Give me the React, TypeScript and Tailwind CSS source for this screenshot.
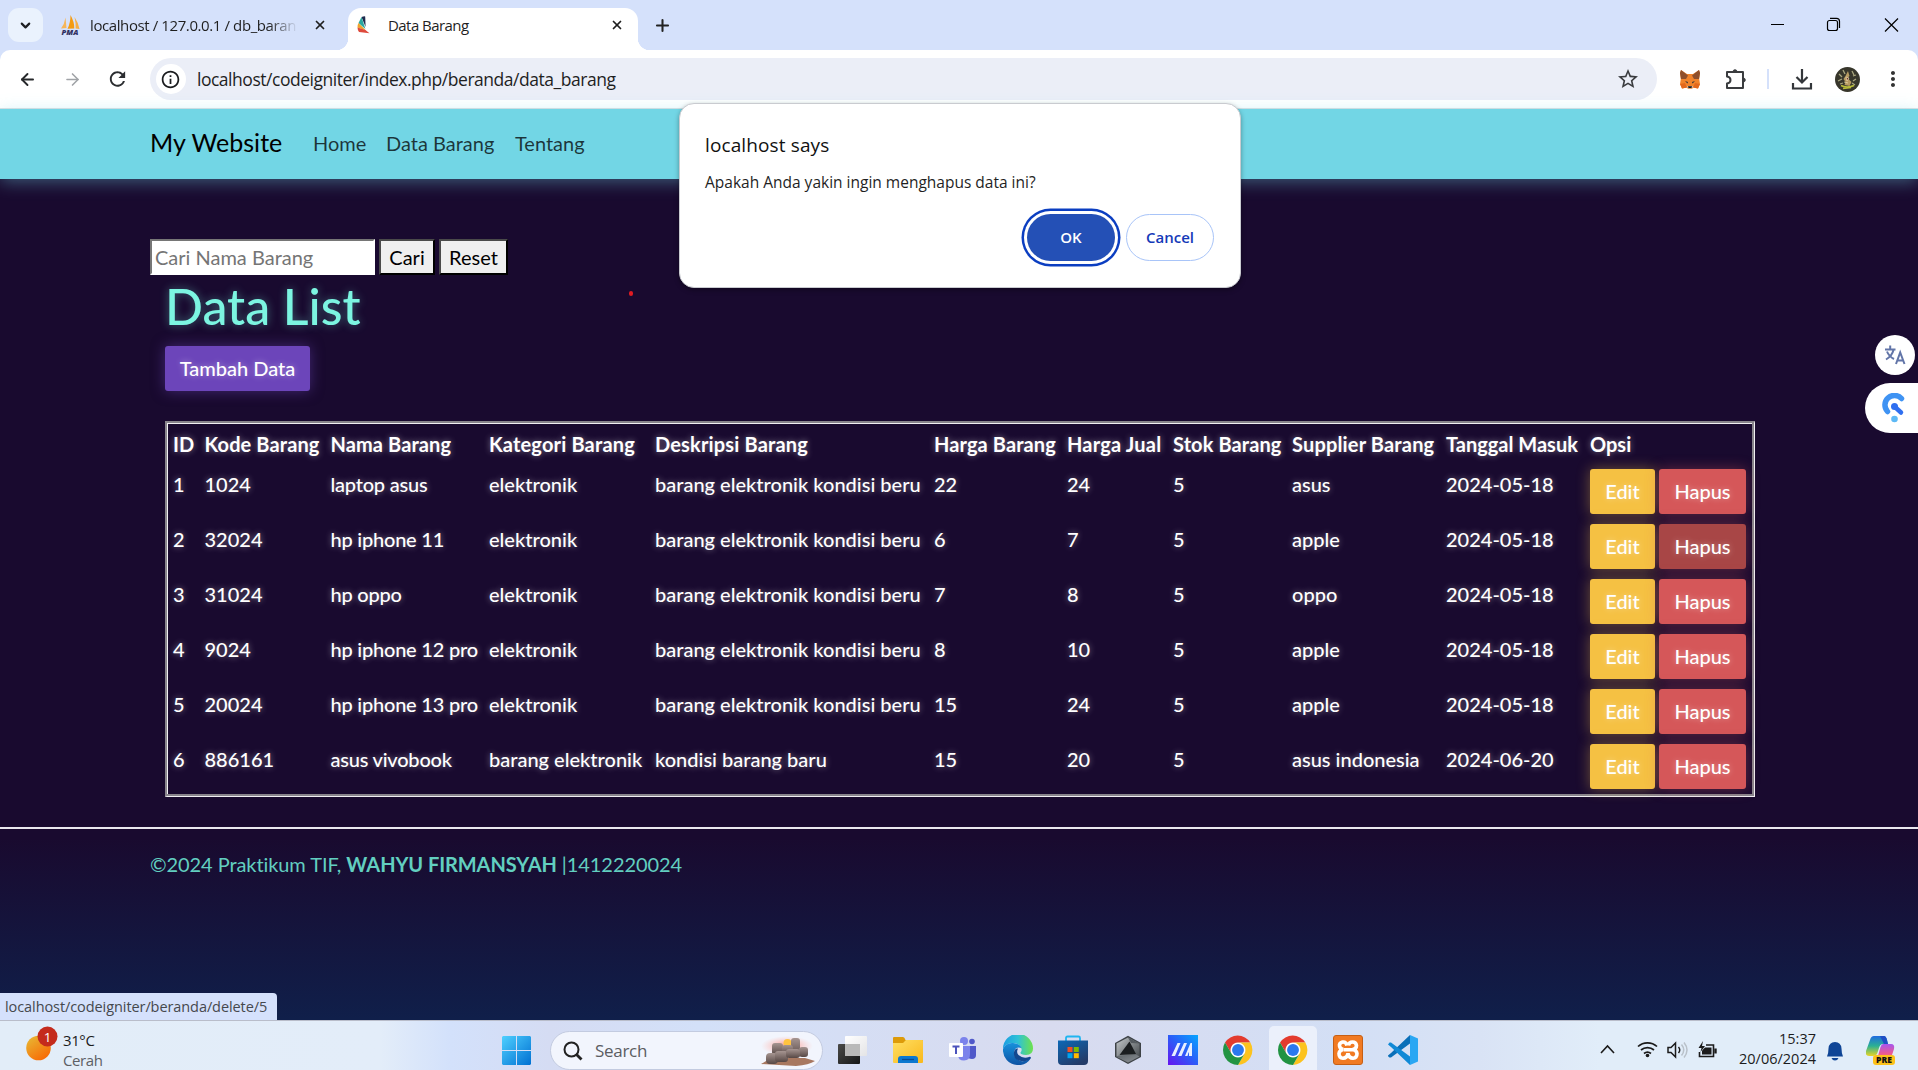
import React from 'react';
import { ChevronDown, X, Plus, ArrowLeft, ArrowRight } from 'lucide-react';
import { MdRefresh, MdInfoOutline, MdStarBorder, MdMoreVert } from 'react-icons/md';

const seg = "font-['Open_Sans','Noto_Sans',sans-serif] whitespace-nowrap";

const rows = [
  ['1', '1024', 'laptop asus', 'elektronik', 'barang elektronik kondisi beru', '22', '24', '5', 'asus', '2024-05-18'],
  ['2', '32024', 'hp iphone 11', 'elektronik', 'barang elektronik kondisi beru', '6', '7', '5', 'apple', '2024-05-18'],
  ['3', '31024', 'hp oppo', 'elektronik', 'barang elektronik kondisi beru', '7', '8', '5', 'oppo', '2024-05-18'],
  ['4', '9024', 'hp iphone 12 pro', 'elektronik', 'barang elektronik kondisi beru', '8', '10', '5', 'apple', '2024-05-18'],
  ['5', '20024', 'hp iphone 13 pro', 'elektronik', 'barang elektronik kondisi beru', '15', '24', '5', 'apple', '2024-05-18'],
  ['6', '886161', 'asus vivobook', 'barang elektronik', 'kondisi barang baru', '15', '20', '5', 'asus indonesia', '2024-06-20'],
];

const heads: [string, string][] = [
  ['ID', 'w-[31.5px]'],
  ['Kode Barang', 'w-[126px] tracking-[0.1px]'],
  ['Nama Barang', 'w-[158.5px] tracking-[0.1px]'],
  ['Kategori Barang', 'w-[166px] tracking-[0.16px]'],
  ['Deskripsi Barang', 'w-[279px] tracking-[0.16px]'],
  ['Harga Barang', 'w-[133px] tracking-[0.1px]'],
  ['Harga Jual', 'w-[106px] tracking-[0.2px]'],
  ['Stok Barang', 'w-[119px] tracking-[0.1px]'],
  ['Supplier Barang', 'w-[154px] tracking-[0.16px]'],
  ['Tanggal Masuk', 'w-[144px]'],
  ['Opsi', 'w-[167px]'],
];

function PmaIcon() {
  return (
    <svg viewBox="0 0 20 20" className="h-5 w-5 shrink-0">
      <path d="M5.500 2.500 6.500 13 1 13.500Q4.500 9 5.500 2.500Z" fill="#f6b65a" />
      <path d="M10.500 0Q14.500 7 14.300 13.500L7.500 13.800Q10.500 8 10.500 0Z" fill="#f49b12" />
      <path d="M14.500 2Q18.500 8 19.500 14L15.600 13.500Q16 8 14.500 2Z" fill="#f6ae45" />
      <text x="10" y="19.800" fontSize="7.600" textAnchor="middle" fontWeight="800" fontStyle="italic" fill="#2f3061" fontFamily="Open Sans">PMA</text>
    </svg>
  );
}

function SailIcon() {
  return (
    <svg viewBox="0 0 14 18" className="h-[18px] w-[14px] shrink-0">
      <path d="M4.500 1Q7.500 0 8.200 .5L8.600 11Z" fill="#1f2a4d" />
      <path d="M4.500 1Q3 4 1.500 7L8.400 13Z" fill="#2ba8a0" />
      <path d="M1.500 7Q.3 9 .5 11.500L9 14.500Z" fill="#f0a32c" />
      <path d="M.5 11.500Q.5 14 2 16L12.500 17.300Q10 15.500 8.500 14Z" fill="#de4a3c" />
    </svg>
  );
}

function TabStrip() {
  return (
    <div className="flex h-[50px] shrink-0 bg-[#d5e1fb] pl-2">
      <div className="mt-2 flex h-[34px] w-[35px] items-center justify-center rounded-[11px] bg-[#eaf2fd]">
        <ChevronDown size={15} strokeWidth={3.4} className="text-[#1d1f22]" />
      </div>
      <div className="ml-[17px] flex h-[50px] w-[280px] items-center">
        <PmaIcon />
        <span className={`${seg} ml-[10px] w-[208px] text-[15px] tracking-[-0.4px] text-[#1f1f1f] [mask-image:linear-gradient(to_right,black_86%,transparent)]`}>localhost / 127.0.0.1 / db_baran</span>
        <X size={14} strokeWidth={3} className="ml-[15px] text-[#1f1f1f]" />
      </div>
      <div className="relative mt-2 ml-[8px] flex h-[42px] w-[290px] items-center rounded-t-[13px] bg-white pb-2 pl-[9px]">
        <div className="absolute bottom-0 -left-3 h-3 w-3 bg-[radial-gradient(circle_at_0_0,transparent_12px,white_12.5px)]" />
        <div className="absolute -right-3 bottom-0 h-3 w-3 bg-[radial-gradient(circle_at_100%_0,transparent_12px,white_12.5px)]" />
        <SailIcon />
        <span className={`${seg} ml-[17px] w-[222px] text-[15px] tracking-[-0.55px] text-[#1f1f1f]`}>Data Barang</span>
        <X size={14} strokeWidth={3} className="text-[#1f1f1f]" />
      </div>
      <Plus size={19} strokeWidth={2.6} className="mt-[16px] ml-[15px] text-[#222]" />
      <div className="mt-[13px] mr-[19px] ml-auto flex h-6 items-center text-black">
        <svg width="132" height="24" fill="none" stroke="currentColor" strokeWidth="1.2">
          <path d="M4 11.500h13M118 5.500l13 13m0-13l-13 13" />
          <rect x="60.500" y="7.500" width="10" height="10" rx="2" />
          <path d="M63 5.300h6.500q3 0 3 3V15" />
        </svg>
      </div>
    </div>
  );
}

function FoxIcon() {
  return (
    <svg viewBox="0 0 20 19" className="h-[19px] w-5">
      <path d="M1 0 7 4H13L19 0 20 3 19.200 9 20 14 18 18.500 13 17.500 12 19H8L7 17.500 2 18.500 0 14 .8 9 0 3Z" fill="#f0832b" />
      <path d="M1 0 8 5.500 6 9 1 9 0 3ZM19 0 12 5.500 14 9 19 9 20 3Z" fill="#8f4f2b" />
      <path d="M5 11l3 1-.5 1.500ZM15 11l-3 1 .5 1.500Z" fill="#2b3139" />
      <path d="M7 16h6l-1 2.500H8Z" fill="#cfbfb2" />
      <path d="M8 16.200h4l-.5 1.800h-3Z" fill="#17191d" />
      <path d="M0 14l5-1 2 4.500L2 18.500ZM20 14l-5-1-2 4.500L18 18.500Z" fill="#e2681c" />
    </svg>
  );
}

function Toolbar() {
  return (
    <div className="shrink-0 bg-[#d5e1fb]">
      <div className="flex h-[59px] items-center rounded-t-[10px] border-b border-[#dcdfe2] bg-white pr-[13px] pl-[18px]">
        <ArrowLeft size={19} strokeWidth={2.4} className="text-[#26282b]" />
        <ArrowRight size={19} strokeWidth={2} className="ml-[26px] text-[#a0a3a7]" />
        <MdRefresh className="ml-[24px] h-[24px] w-[23px] text-[#2b2d30]" />
        <div className="ml-[21px] flex h-[42px] w-[1508px] items-center rounded-full bg-[#ebeef7] pr-[17px] pl-[6px]">
          <div className="flex h-[30px] w-[30px] items-center justify-center rounded-full bg-white">
            <MdInfoOutline className="h-[21px] w-[21px] text-[#1b1c1f]" />
          </div>
          <span className={`${seg} ml-[11px] text-[17.5px] tracking-[-0.47px] text-[#1f1f1f]`}>localhost/codeigniter/index.php/beranda/data_barang</span>
          <MdStarBorder className="ml-auto h-[24px] w-[24px] text-[#3a3c3f]" />
        </div>
        <div className="ml-[23px]"><FoxIcon /></div>
        <svg viewBox="0 0 22 22" className="ml-[25px] h-[22px] w-[22px]" fill="none" stroke="#3a3c3f" strokeWidth="2" strokeLinejoin="round">
          <path d="M2 4h16v16H2v-4.500q3.500-.5 3.500-3.500T2 8.500Z" />
          <path d="M8 4q0-2.300 2-2.300T12 4ZM18 10q2.300 0 2.300 2T18 14Z" fill="#3a3c3f" strokeWidth="1" />
        </svg>
        <div className="ml-[20px] h-5 w-[2px] bg-[#d5e1fb]" />
        <svg viewBox="0 0 22 22" className="ml-[22px] h-[22px] w-[22px]" fill="none" stroke="#33363a" strokeWidth="2.200">
          <path d="M11 1v13M5.500 9l5.500 5.500L16.500 9M2 15v5.500h18V15" />
        </svg>
        <svg viewBox="0 0 25 25" className="ml-[22px] h-[25px] w-[25px]">
          <circle cx="12.500" cy="12.500" r="12.500" fill="#37362b" />
          <path d="M4 7l3 3M17 4l2 4M3 14l4-2M21 12l-3 2M8 3l2 4M20 18l-3-2M18 9l3-1M5 17l3-1" stroke="#a9a67e" strokeWidth="1.300" />
          <path d="M13 4l1.500 5-2 2 4 4-2 4-5-1 1-3-2-3 2-3Z" fill="#b79b62" />
          <path d="M11 10l3 1-2 3ZM9 15l4 1" fill="#6d2f2c" stroke="#f0e3b0" strokeWidth=".7" />
          <path d="M6 18.500q6 3 13 0M8 21.500l8-1" stroke="#b9bd3a" strokeWidth="1.500" fill="none" />
        </svg>
        <MdMoreVert className="ml-[21px] h-[24px] w-[24px] text-[#333]" />
      </div>
    </div>
  );
}

function Navbar() {
  return (
    <nav className="relative flex h-[70px] shrink-0 items-center bg-[#72d6e5] pb-[2px] pl-[150px] shadow-[0_3px_16px_rgba(114,214,229,0.4)]">
      <span className="w-[163px] text-[25px] tracking-[0.05px] text-black">My Website</span>
      <span className="w-[73px] text-[20px] text-black/75">Home</span>
      <span className="w-[129px] text-[20px] text-black/75">Data Barang</span>
      <span className="text-[20px] text-black/75">Tentang</span>
    </nav>
  );
}

const glow = '[text-shadow:0_0_6px_rgba(255,255,255,0.45)]';

function Content() {
  return (
    <main className="flex flex-1 flex-col items-start bg-[linear-gradient(180deg,#190a2f_0px,#190a2f_660px,#101f4a_840px)] pt-[60px] text-[20px] leading-[30px] [font-variant-ligatures:none]">
      <div className="flex h-[36px] gap-[4px] pl-[150px] text-black">
        <div className="flex w-[225px] items-center border-2 border-[#767676] border-r-white border-b-white bg-white pb-[1px] pl-[3px] text-[#757575]">Cari Nama Barang</div>
        <div className="flex w-[56px] items-center justify-center border-[2px] border-t-[#4a4a4a] border-r-black border-b-black border-l-[#4a4a4a] bg-[#efefef] pb-[1px]">Cari</div>
        <div className="flex w-[69px] items-center justify-center border-[2px] border-t-[#4a4a4a] border-r-black border-b-black border-l-[#4a4a4a] bg-[#efefef] pb-[1px]">Reset</div>
      </div>
      <h1 className="mt-[1px] ml-[165px] h-[70px] text-[50px] leading-[60px] font-medium text-[#7cf5e1] [text-shadow:0_0_10px_rgba(124,245,225,0.4)]">Data List</h1>
      <div className="ml-[165px] flex h-[45px] w-[145px] items-center justify-center rounded-[3px] bg-[#6c45ba] pb-[2px] font-medium text-white shadow-[0_0_14px_rgba(108,69,186,0.5)] [text-shadow:0_0_6px_rgba(255,255,255,0.4)]">Tambah Data</div>
      <table className="mt-[30px] ml-[165px] w-[1590px] table-fixed border-separate border-spacing-0 border-t-2 border-r border-b border-l-2 border-t-[#88858c] border-r-[#f1f0f3] border-b-[#f1f0f3] border-l-[#88858c] pt-px pr-[2px] pb-[2px] pl-px text-left text-white shadow-[inset_-2px_-2px_0_#88858c,inset_1px_1px_0_#f1f0f3]">
        <thead>
          <tr className="h-[40px]">
            {heads.map(([h, w]) => (
              <th key={h} className={`${w} ${glow} p-[5px] align-top font-bold whitespace-nowrap`}>{h}</th>
            ))}
          </tr>
        </thead>
        <tbody>
          {rows.map((r) => (
            <tr key={r[0]} className="h-[55px]">
              {r.map((c, i) => (
                <td key={i} className={`${glow} p-[5px] align-top font-medium whitespace-nowrap ${i === 2 ? 'tracking-[-0.22px]' : ''}`}>{c}</td>
              ))}
              <td className="p-[5px] align-top font-medium">
                <div className="flex h-[45px] gap-[4px] [text-shadow:0_0_6px_rgba(255,255,255,0.4)]">
                  <div className="flex w-[65px] items-center justify-center rounded-[3px] bg-[#f5c143] pb-[2px] shadow-[0_0_14px_rgba(245,193,67,0.4)]">Edit</div>
                  <div className={`flex w-[87px] items-center justify-center rounded-[3px] pb-[2px] shadow-[0_0_14px_rgba(213,87,89,0.4)] ${r[0] === '2' ? 'bg-[#a84646]' : 'bg-[#d55759]'}`}>Hapus</div>
                </div>
              </td>
            </tr>
          ))}
        </tbody>
      </table>
      <footer className="mt-[30px] w-full border-t-2 border-[#e9e7ee] pt-[20px] pl-[150px] tracking-[-0.08px] text-[#62cfc0]">
        ©2024 Praktikum TIF, <b>WAHYU FIRMANSYAH</b> |1412220024
      </footer>
    </main>
  );
}

function Dialog() {
  return (
    <div className={`${seg} absolute top-[103px] left-[679px] flex h-[185px] w-[562px] flex-col rounded-[15px] border border-[#c9cbd0] bg-white pl-[25px] text-[#1f1f1f] shadow-[0_2px_5px_rgba(0,0,0,0.35)]`}>
      <div className="mt-[27px] text-[19px] leading-7 font-medium tracking-[0.12px] text-[#111]">localhost says</div>
      <div className="mt-[11px] text-[15.5px] leading-6">Apakah Anda yakin ingin menghapus data ini?</div>
      <div className="mt-[20px] mr-[26px] flex justify-end gap-[11px] text-[15px] font-semibold">
        <div className="flex h-[47px] w-[88px] items-center justify-center rounded-full bg-[#2450b6] text-white shadow-[0_0_0_3px_white,0_0_0_5.5px_#0b3ec1]">OK</div>
        <div className="flex h-[47px] w-[88px] items-center justify-center rounded-full border border-[#a8c4f8] text-[#1439b8]">Cancel</div>
      </div>
    </div>
  );
}

function FloatingTools() {
  return (
    <div className="absolute top-[335px] right-0 flex flex-col items-end gap-2">
      <div className="mr-[3px] flex h-10 w-10 items-center justify-center rounded-full bg-white">
        <svg viewBox="0 0 22 22" className="h-[22px] w-[22px]" fill="none" stroke="#6275a8" strokeWidth="2">
          <path d="M1 5.500h10.500M6.200 1.500v4M3 7.500q2 5 7 7.500M9.500 6q-1.500 6-7.500 9.500M12 20l4.200-11.500L20.500 20M13.500 16.500h5.500" />
        </svg>
      </div>
      <div className="flex h-[50px] w-[53px] items-center rounded-l-full bg-white pl-[17px]">
        <svg viewBox="0 0 24 30" className="h-[30px] w-6" fill="none">
          <path d="M19.500 5.500A9 9 0 1 0 5.500 18.500" stroke="#3f93f3" strokeWidth="5.500" strokeLinecap="round" />
          <circle cx="12.500" cy="13.500" r="3.500" fill="#2f6ff0" />
          <path d="M13 14l6 5.500" stroke="#2f6ff0" strokeWidth="4.500" strokeLinecap="round" />
          <circle cx="12.500" cy="26" r="3.300" fill="#5db9f5" />
        </svg>
      </div>
    </div>
  );
}

function ChromeIcon() {
  return (
    <svg viewBox="0 0 48 48" className="h-[30px] w-[30px]">
      <circle cx="24" cy="24" r="12" fill="#fff" />
      <path d="M24 12h19.780A24 24 0 0 0 3.210 12L13.600 30A12 12 0 0 1 24 12Z" fill="#e33b2e" />
      <path d="M34.390 30 24 48A24 24 0 0 0 43.780 12H24A12 12 0 0 1 34.390 30Z" fill="#fcc31e" />
      <path d="M13.610 30 3.220 12A24 24 0 0 0 24 48L34.390 30A12 12 0 0 1 13.610 30Z" fill="#229342" />
      <circle cx="24" cy="24" r="9.500" fill="#2b78ee" />
    </svg>
  );
}

function TaskIcon({ n }: { n: number }) {
  const c = 'h-[30px] w-[30px]';
  switch (n) {
    case 0:
      return (
        <svg viewBox="0 0 30 30" className={c}>
          <defs>
            <linearGradient id="tv" x2="1" y2="1"><stop stopColor="#4a4a48" /><stop offset="1" stopColor="#151617" /></linearGradient>
            <linearGradient id="tw" x2="1" y2="1"><stop stopColor="#fff" /><stop offset="1" stopColor="#e4e4e6" /></linearGradient>
          </defs>
          <rect x="0" y="9" width="22" height="20" rx="1" fill="url(#tv)" />
          <rect x="7" y="1" width="22" height="20" rx="1" fill="url(#tw)" />
          <path d="M7 9h15v12H7Z" fill="#b9b9b9" />
        </svg>
      );
    case 1:
      return (
        <svg viewBox="0 0 30 30" className={c}>
          <defs><linearGradient id="fo" x2="1" y2="1"><stop stopColor="#ffdf63" /><stop offset="1" stopColor="#f9b81c" /></linearGradient></defs>
          <path d="M0 3q0-1 1-1h9q1.500 0 2.500 3H29q1 0 1 1v3H0Z" fill="#dd9b0a" />
          <path d="M0 8h10l3-3h16q1 0 1 1v21q0 1-1 1H1q-1 0-1-1Z" fill="url(#fo)" />
          <path d="M5 28v-4q0-3 3-3h14q3 0 3 3v4Z" fill="#0c78d0" />
          <path d="M9 24.500h12" stroke="#0a4b92" strokeWidth="1.300" />
        </svg>
      );
    case 2:
      return (
        <svg viewBox="0 0 30 30" className={c}>
          <circle cx="16" cy="6" r="4" fill="#7b83eb" />
          <circle cx="24" cy="6.500" r="2.800" fill="#5059c9" />
          <path d="M20 11h8v9q0 4-4 4t-5-3Z" fill="#5059c9" />
          <path d="M11 11h11v8q0 6.500-6 6.500T10 20Z" fill="#7b83eb" />
          <rect x="1" y="8" width="14" height="14" rx="1" fill="#fff" />
          <path d="M4.500 11.500h7M8 11.500V19" stroke="#4b53bc" strokeWidth="2" />
        </svg>
      );
    case 3:
      return (
        <svg viewBox="0 0 30 30" className={c}>
          <defs>
            <linearGradient id="ea" x2="1"><stop stopColor="#1b9de2" /><stop offset=".5" stopColor="#2fc2d6" /><stop offset="1" stopColor="#6ee24b" /></linearGradient>
            <linearGradient id="eb" x2="0" y2="1"><stop stopColor="#1791dc" /><stop offset="1" stopColor="#0e52a4" /></linearGradient>
          </defs>
          <path d="M0 14A15 15 0 0 1 30 13.500Q30 20 23 20 17 20 17.500 17.500 19 16 18.500 14 17 8 9 8 3 8 0 14Z" fill="url(#ea)" />
          <path d="M0 14Q3 7.500 10 8 17 8.500 18.500 13 12.500 11 11 17 10.500 24 18 26 23 27 28 23 23 31 14 30A15 15 0 0 1 0 14Z" fill="url(#eb)" />
          <path d="M11 17Q10 25 18 26 24 27 28 23 27.500 21 26 22 20 24 15.500 20 13 17.500 15 13.500 12 13 11 17Z" fill="#13478f" />
        </svg>
      );
    case 4:
      return (
        <svg viewBox="0 0 30 30" className={c}>
          <defs><linearGradient id="st" x2=".6" y2="1"><stop stopColor="#0c68b6" /><stop offset="1" stopColor="#243b68" /></linearGradient></defs>
          <path d="M8 7V3q0-1.500 1.500-1.500h11Q22 1.500 22 3v4" fill="none" stroke="#20b5f0" strokeWidth="1.800" />
          <path d="M0 5.500h30V26q0 4-4 4H4q-4 0-4-4Z" fill="url(#st)" />
          <path d="M9.500 12h5v5h-5Z" fill="#f25022" /><path d="M15.800 12h5v5h-5Z" fill="#7fba00" />
          <path d="M9.500 18.200h5v5h-5Z" fill="#00a4ef" /><path d="M15.800 18.200h5v5h-5Z" fill="#ffb900" />
        </svg>
      );
    case 5:
      return (
        <svg viewBox="0 0 30 30" className={c}>
          <defs>
            <linearGradient id="ha" x2="1" y2="1"><stop stopColor="#c4c8ca" /><stop offset="1" stopColor="#3a3f43" /></linearGradient>
            <linearGradient id="hb" x2="1" y2="1"><stop stopColor="#5c6266" /><stop offset="1" stopColor="#8d9297" /></linearGradient>
          </defs>
          <path d="M15 .8 28 8V22L15 29 2 22V8Z" fill="#3e4347" />
          <path d="M15 2.500 26.500 8.500V21.500L15 27.500 3.500 21.500V8.500Z" fill="url(#ha)" />
          <path d="M15 2.500 26.500 8.500 18 8Z" fill="#555b60" />
          <path d="M3.500 21.500 6 20.500 23 19.500 26.500 21.500 15 27.500Z" fill="url(#hb)" />
          <path d="M16.500 6.500 23 19 6.500 20Z" fill="#1b1e20" />
        </svg>
      );
    case 6:
      return (
        <svg viewBox="0 0 30 30" className={c}>
          <defs><linearGradient id="ma" x1="1" x2="0" y2="1"><stop stopColor="#05a6ff" /><stop offset=".5" stopColor="#2c5cf8" /><stop offset="1" stopColor="#6714f0" /></linearGradient></defs>
          <path d="M0 0h30v30H0Z" fill="url(#ma)" />
          <path d="M3.500 21 9.500 8H12.500L7 21ZM10 21 16 8H19L13.500 21Z" fill="#e8efff" />
          <path d="M17 21 22.500 8H24V21H21V17.500H20.500L19.500 21Z" fill="#e8efff" />
        </svg>
      );
    case 9:
      return (
        <div className="flex h-[30px] w-[30px] items-center justify-center rounded-[3px] border border-[#c65f14] bg-[#f17a22]">
          <svg viewBox="0 0 24 24" className="h-[24px] w-[24px]" fill="none" stroke="#fff" strokeWidth="3.600">
            <path d="M11 7.500Q10 3.500 6.500 4 3 5 3.500 8 4 11 7.500 11.500 3.500 12 3 15.500 3 20 7 20.200 11 20 12 15.500 13 20 17 20.200 21 20 21 15.500 20.500 12 16.500 11.500 20.500 11 20.500 7.500 20 4 16.500 4 13 4 12.500 7.500M8 11.800h8.500" />
          </svg>
        </div>
      );
    case 10:
      return (
        <svg viewBox="0 0 30 30" className={c}>
          <path d="M22 0 3 18 0 20.500Q-.5 21 1.500 22.500L3 22.500 22 8.500Z" fill="#0a6fb8" />
          <path d="M22 30 3 12 0 9.500 1.500 7.500 3 7.500 22 21.500Z" fill="#1089d6" />
          <path d="M22 0 30 3.500V26.500L22 30Z" fill="#2aa7f3" />
        </svg>
      );
    default:
      return <ChromeIcon />;
  }
}

function Taskbar() {
  return (
    <div className={`${seg} flex h-[50px] shrink-0 overflow-hidden border-t border-[#b9bdca] bg-[linear-gradient(90deg,#e2edf8_0px,#e3edf9_380px,#d3e1fb_450px,#d5dcf3_550px,#d3e0f8_700px,#d8dbef_1050px,#d3dff5_1350px,#d9e3f5_1480px,#e1edf9_1600px)] text-[#1c1c1c]`}>
      <div className="relative mt-[5px] ml-[26px] w-[476px]">
        <svg viewBox="0 0 32 35" className="h-[35px] w-8">
          <defs><linearGradient id="sun" x2=".7" y2="1"><stop stopColor="#e7bd37" /><stop offset="1" stopColor="#f86a05" /></linearGradient></defs>
          <circle cx="12.500" cy="22" r="12.300" fill="url(#sun)" />
          <circle cx="21.500" cy="10.500" r="10" fill="#c42b1c" />
          <text x="21.500" y="15.500" fontSize="13.500" textAnchor="middle" fill="#fff">1</text>
        </svg>
        <div className="absolute top-[4px] left-[37px] text-[15px] leading-[20px] tracking-[-0.4px]">31°C<div className="text-[#5d6065]">Cerah</div></div>
      </div>
      <svg viewBox="0 0 29 29" className="mt-[15px] h-[29px] w-[29px]">
        <defs><linearGradient id="wi" x2="1" y2="1"><stop stopColor="#4fd0ff" /><stop offset="1" stopColor="#0070d2" /></linearGradient></defs>
        <path d="M1 0H14V14H0V1ZM15 0H28L29 1V14H15ZM0 15H14V29H1L0 28ZM15 15H29V28L28 29H15Z" fill="url(#wi)" />
      </svg>
      <div className="mt-[10px] ml-[19px] flex h-[39px] w-[273px] items-center rounded-full border border-[#c3cbe0] bg-[#f2f5fd] pr-[7px] pl-[12px]">
        <svg viewBox="0 0 20 20" className="h-5 w-5" fill="none" stroke="#222" strokeWidth="2"><circle cx="8.500" cy="8.500" r="7" /><path d="M13 13l5.500 5.500" strokeWidth="2.800" /></svg>
        <span className="ml-[12px] text-[17px] tracking-[-0.3px] text-[#5b5d62]">Search</span>
        <svg viewBox="0 0 54 30" className="ml-auto h-[30px] w-[54px]">
          <defs>
            <radialGradient id="glow"><stop stopColor="#ff8d80" /><stop offset="1" stopColor="#ffb9b0" stopOpacity="0" /></radialGradient>
            <linearGradient id="rk" x2="0" y2="1"><stop stopColor="#a69591" /><stop offset="1" stopColor="#574845" /></linearGradient>
          </defs>
          <ellipse cx="26" cy="10" rx="26" ry="10" fill="url(#glow)" />
          <path d="M0 28 10 22H44L54 25Q48 29 35 30Z" fill="#a87860" />
          <circle cx="26.500" cy="7" r="4" fill="#ffc440" />
          <g fill="url(#rk)">
            <rect x="30" y="2" width="9" height="19" rx="3" /><rect x="11" y="7" width="11" height="12" rx="3" />
            <rect x="21" y="9" width="11" height="10" rx="3" /><rect x="38" y="11" width="9" height="10" rx="3" />
            <rect x="5" y="17" width="12" height="11" rx="4" /><rect x="14" y="15" width="13" height="11" rx="3" /><rect x="25" y="13" width="14" height="9" rx="3" />
          </g>
        </svg>
      </div>
      <div className="ml-[2px] flex">
        {[0, 1, 2, 3, 4, 5, 6, 7, 8, 9, 10].map((n) => (
          <div key={n} className="flex w-[55.1px] justify-center">
            <div className={`mt-[5px] flex h-[44px] w-[48px] justify-center rounded-t-[5px] pt-[9px] ${n === 8 ? 'bg-[#ebf0fb]' : ''}`}><TaskIcon n={n} /></div>
          </div>
        ))}
      </div>
      <svg width="150" height="49" className="mr-[22px] ml-auto shrink-0" fill="none" stroke="#1b1b1b" strokeWidth="1.600">
        <path d="M34 32l6.500-7 6.500 7" />
        <path d="M71 25.500a14 14 0 0 1 19 0M74 29a10 10 0 0 1 13 0M77 32.500a5.500 5.500 0 0 1 7 0" strokeWidth="1.700" />
        <circle cx="80.500" cy="34.500" r="1.800" fill="#1b1b1b" stroke="none" />
        <path d="M101 26.500h3l4.500-4.500v14l-4.500-4.500H101Z" strokeWidth="1.500" /><path d="M111.500 26q2.500 3 0 6" strokeWidth="1.400" /><path d="M114.500 23.500q4.500 5.500 0 11M117 21.500q6 7.500 0 15" stroke="#b9c1c9" strokeWidth="1.500" />
        <path d="M139 24h7.500v11.500H132.500v-4.500" /><path d="M138 26.500h6.500v7h-9.500v-4Z" fill="#1b1b1b" stroke="none" /><path d="M136 20l-4.500 7h3l-1 4 4.500-6h-3Z" fill="#1b1b1b" stroke="none" /><path d="M148.500 27.500v5" strokeWidth="2.400" />
      </svg>
      <div className="mt-[8px] text-right text-[14.500px] leading-[20px]">15:37<br />20/06/2024</div>
      <svg viewBox="0 0 18 20" className="mt-[20px] ml-[10px] h-5 w-[18px] shrink-0"><path d="M1 15.500Q2.500 12 2.500 7.500 3 1 9 1T15.500 7.500Q15.500 12 17 15.500ZM5.500 17h7q-1 2.500-3.500 2.500T5.500 17Z" fill="#0f4596" /></svg>
      <svg viewBox="0 0 30 30" className="mt-[15px] mr-[22px] ml-[22px] h-[30px] w-[30px] shrink-0">
        <defs>
          <linearGradient id="ca" x2="0" y2="1"><stop stopColor="#1f6be0" /><stop offset=".5" stopColor="#2bb193" /><stop offset="1" stopColor="#e8d525" /></linearGradient>
          <linearGradient id="cb" x2="0" y2="1"><stop stopColor="#a656ef" /><stop offset=".6" stopColor="#ec5a92" /><stop offset="1" stopColor="#f98b4c" /></linearGradient>
        </defs>
        <path d="M8 0H18Q20 0 21 4L22 8H17Q14 8 13 12L11 18Q10 20 7 20H3Q-1 20 0 15L4 4Q5 0 8 0Z" fill="url(#ca)" />
        <path d="M17 8H25Q29 8 28 13L26 19Q25 24 20 24H9Q11 23 12 20L14.500 11Q15.500 8 17 8Z" fill="url(#cb)" />
        <path d="M14 0h4q2 0 3 4l1 4h-4Z" fill="#1f4fc4" />
        <rect x="7" y="19" width="22" height="10" rx="3" fill="#fcc21b" />
        <text x="18" y="27" fontSize="8.500" fontWeight="800" textAnchor="middle" fill="#111">PRE</text>
      </svg>
    </div>
  );
}

export default function App() {
  return (
    <div className="relative flex h-[1070px] w-[1918px] flex-col overflow-hidden font-['Lato',sans-serif]">
      <TabStrip />
      <Toolbar />
      <Navbar />
      <Content />
      <Taskbar />
      <Dialog />
      <FloatingTools />
      <div className="absolute top-[291px] left-[629px] h-[5px] w-[4px] rounded-full bg-[#e01b22]" />
      <div className={`${seg} absolute top-[993px] left-0 flex h-[27px] w-[277px] items-center rounded-tr-[4px] bg-[#d5e1fc] pl-[5px] text-[14.5px] tracking-[-0.08px] text-[#45484d]`}>localhost/codeigniter/beranda/delete/5</div>
    </div>
  );
}
